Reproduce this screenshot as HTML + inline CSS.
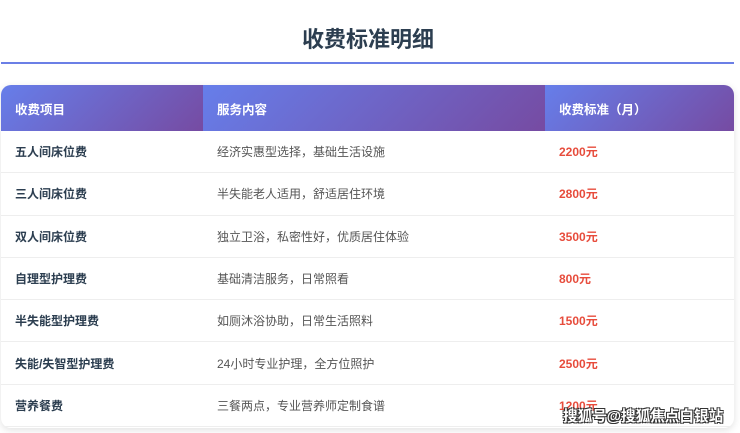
<!DOCTYPE html>
<html><head><meta charset="utf-8"><style>
body{margin:0;width:740px;height:433px;background:#fff;font-family:"Liberation Sans","Noto Sans CJK SC",sans-serif;overflow:hidden;position:relative}
h1{position:absolute;top:24px;left:0;width:736px;margin:0;text-align:center;font-size:22px;font-weight:bold;color:#2c3e50;line-height:32px}
.line{position:absolute;left:1px;top:62px;width:733px;height:2px;background:#6b7fe6}
.card{position:absolute;left:1px;top:85px;width:733px;height:343px;border-radius:10px;box-shadow:0 2px 8px rgba(0,0,0,.12);overflow:hidden;background:#fff}
table{border-collapse:collapse;width:733px;font-size:12px}
th{height:46px;color:#fff;text-align:left;font-weight:bold;padding:0 0 0 14px;background:linear-gradient(135deg,#667eea,#764ba2);font-size:12.5px}
td{height:41.3px;padding:0 0 0 14px;border-bottom:1px solid #eee}
td.a{font-weight:bold;color:#2c3e50}
td.b{color:#555}
td.c{color:#e74c3c;font-weight:bold}
.wm{position:absolute;left:563px;top:405px;font-size:14.6px;color:#fff;font-weight:bold;text-shadow:-1px -1px 0 #333,1px -1px 0 #333,-1px 1px 0 #333,1px 1px 0 #333}
</style></head><body>
<h1>收费标准明细</h1>
<div class="line"></div>
<div class="card"><table>
<tr><th style="width:188px">收费项目</th><th style="width:328px">服务内容</th><th>收费标准（月）</th></tr>
<tr><td class="a">五人间床位费</td><td class="b">经济实惠型选择，基础生活设施</td><td class="c">2200元</td></tr>
<tr><td class="a">三人间床位费</td><td class="b">半失能老人适用，舒适居住环境</td><td class="c">2800元</td></tr>
<tr><td class="a">双人间床位费</td><td class="b">独立卫浴，私密性好，优质居住体验</td><td class="c">3500元</td></tr>
<tr><td class="a">自理型护理费</td><td class="b">基础清洁服务，日常照看</td><td class="c">800元</td></tr>
<tr><td class="a">半失能型护理费</td><td class="b">如厕沐浴协助，日常生活照料</td><td class="c">1500元</td></tr>
<tr><td class="a">失能/失智型护理费</td><td class="b">24小时专业护理，全方位照护</td><td class="c">2500元</td></tr>
<tr><td class="a">营养餐费</td><td class="b">三餐两点，专业营养师定制食谱</td><td class="c">1200元</td></tr>
</table></div>
<div class="wm">搜狐号@搜狐焦点白银站</div>
</body></html>
